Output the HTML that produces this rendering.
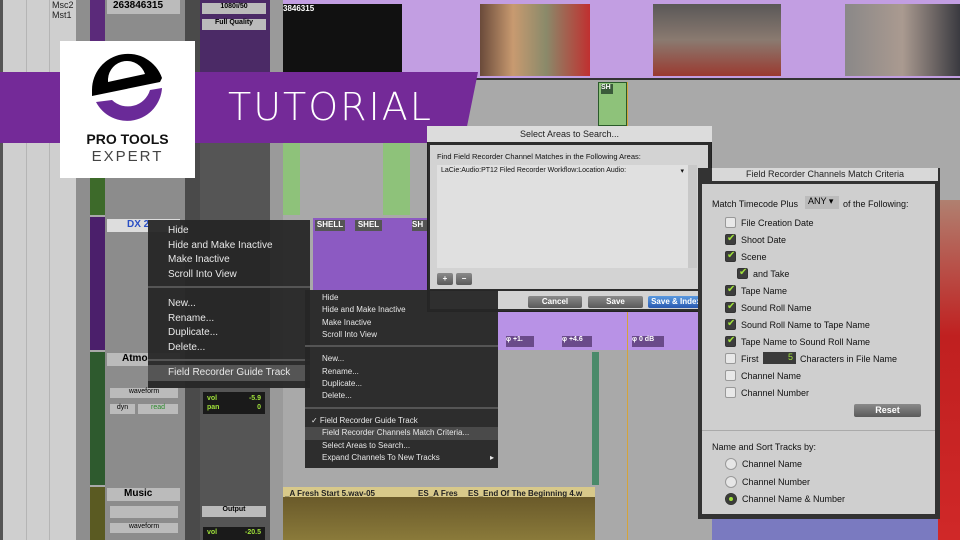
<!DOCTYPE html>
<html><head><meta charset="utf-8"><style>
*{margin:0;padding:0;box-sizing:border-box}
body{width:960px;height:540px;overflow:hidden;background:#a9a9a9;font-family:"Liberation Sans",sans-serif;position:relative}
.a{position:absolute}
.menu{background:rgba(38,38,38,.95);color:#e8e8e8;font-size:10px}
.menu div{position:absolute;white-space:nowrap}
.sep{height:2px;background:#555}
.cb{position:absolute;width:11px;height:11px;background:#e8e8e8;border:1px solid #999;border-radius:2px}
.ck{background:#3d3d3d;border-color:#333}
.ck:after{content:"✔";color:#9fe03a;font-size:10px;position:absolute;left:1px;top:-2px}
.fl{position:absolute;font-size:9px;color:#111;white-space:nowrap}
.btn{position:absolute;height:12px;border-radius:2px;background:linear-gradient(#8a8a8a,#5a5a5a);color:#fff;font-size:8px;font-weight:bold;text-align:center;line-height:12px}
.rad{position:absolute;width:12px;height:12px;border-radius:50%;background:#e6e6e6;border:1px solid #999}
.vl{position:absolute;top:0;bottom:0;width:1px;background:#b8b8b8}
</style></head><body>
<div class="a" style="left:0;top:0;width:76px;height:540px;background:#cfcfcf"></div>
<div class="a" style="left:0;top:0;width:3px;height:540px;background:#555"></div>
<div class="a" style="left:26px;top:0;width:1px;height:540px;background:#b5b5b5"></div>
<div class="a" style="left:49px;top:0;width:1px;height:540px;background:#b5b5b5"></div>
<div class="a" style="left:76px;top:0;width:14px;height:540px;background:#8e8e8e"></div>
<div class="a" style="left:52px;top:0;font-size:9px;color:#222;line-height:10px">Msc2<br>Mst1</div>
<div class="a" style="left:90px;top:0;width:15px;height:215px;background:#5b2a7a"></div>
<div class="a" style="left:90px;top:100px;width:15px;height:115px;background:#3d6a2a"></div>
<div class="a" style="left:90px;top:217px;width:15px;height:133px;background:#4b1f6b"></div>
<div class="a" style="left:90px;top:352px;width:15px;height:133px;background:#2e5a2e"></div>
<div class="a" style="left:90px;top:487px;width:15px;height:53px;background:#5a5a22"></div>
<div class="a" style="left:105px;top:0;width:80px;height:540px;background:#8c8c8c"></div>
<div class="a" style="left:107px;top:0;width:73px;height:14px;background:#bbb;font-size:10px;font-weight:bold;padding-left:6px">263846315</div>
<div class="a" style="left:107px;top:219px;width:73px;height:13px;background:#ddd;font-size:10px;font-weight:bold;color:#2a4fc4;padding-left:20px">DX 2</div>
<div class="a" style="left:107px;top:353px;width:73px;height:13px;background:#bbb;font-size:10px;font-weight:bold;padding-left:15px">Atmo</div>
<div class="a" style="left:107px;top:488px;width:73px;height:13px;background:#bbb;font-size:10px;font-weight:bold;padding-left:17px">Music</div>
<div class="a" style="left:110px;top:388px;width:68px;height:10px;background:#bbb;font-size:7px;text-align:center">waveform</div>
<div class="a" style="left:110px;top:404px;width:25px;height:10px;background:#bbb;font-size:7px;text-align:center">dyn</div>
<div class="a" style="left:138px;top:404px;width:40px;height:10px;background:#bbb;font-size:7px;text-align:center;color:#2a8a2a">read</div>
<div class="a" style="left:110px;top:506px;width:68px;height:12px;background:#bbb"></div>
<div class="a" style="left:110px;top:523px;width:68px;height:10px;background:#bbb;font-size:7px;text-align:center">waveform</div>
<div class="a" style="left:185px;top:0;width:15px;height:540px;background:#4a4a4a"></div>
<div class="a" style="left:200px;top:0;width:70px;height:72px;background:#4b2a66"></div>
<div class="a" style="left:202px;top:3px;width:64px;height:11px;background:#bbb;font-size:7px;font-weight:bold;text-align:center">1080i/50</div>
<div class="a" style="left:202px;top:19px;width:64px;height:11px;background:#bbb;font-size:7px;font-weight:bold;text-align:center">Full Quality</div>
<div class="a" style="left:200px;top:143px;width:70px;height:397px;background:#555"></div>
<div class="a" style="left:203px;top:392px;width:62px;height:22px;background:#1a1a1a;color:#9fe03a;font-size:7px;font-weight:bold;padding:2px 4px;line-height:9px">vol<span style="float:right">-5.9</span><br>pan<span style="float:right">0</span></div>
<div class="a" style="left:202px;top:506px;width:64px;height:11px;background:#bbb;font-size:7px;font-weight:bold;text-align:center">Output</div>
<div class="a" style="left:203px;top:527px;width:62px;height:13px;background:#1a1a1a;color:#9fe03a;font-size:7px;font-weight:bold;padding:2px 4px">vol<span style="float:right">-20.5</span></div>
<div class="a" style="left:270px;top:0;width:13px;height:540px;background:#9a9a9a"></div>
<div class="a" style="left:283px;top:0;width:677px;height:80px;background:#c29ee2;border-bottom:2px solid #333"></div>
<div class="a" style="left:283px;top:4px;width:119px;height:72px;background:#111;color:#fff;font-size:8px;font-weight:bold">3846315</div>
<div class="a" style="left:480px;top:4px;width:110px;height:72px;background:linear-gradient(90deg,#6a4a3a,#c89a70 30%,#8a8a6a 60%,#c03030)"></div>
<div class="a" style="left:653px;top:4px;width:128px;height:72px;background:linear-gradient(180deg,#5a5858,#8a7a70 50%,#9a3a30)"></div>
<div class="a" style="left:845px;top:4px;width:115px;height:72px;background:linear-gradient(90deg,#8a8888,#aa9a90 50%,#3a3a40)"></div>
<div class="a" style="left:283px;top:82px;width:677px;height:133px;background:#a9a9a9"></div>
<div class="a" style="left:283px;top:143px;width:17px;height:72px;background:#8ec27a"></div>
<div class="a" style="left:383px;top:143px;width:27px;height:72px;background:#8ec27a"></div>
<div class="a" style="left:598px;top:82px;width:29px;height:44px;background:#8ec27a;border:1px solid #2a5a2a"></div>
<div class="a" style="left:601px;top:84px;width:12px;height:10px;background:#3a5a3a;color:#fff;font-size:7px;font-weight:bold">SH</div>
<div class="a" style="left:283px;top:217px;width:145px;height:133px;background:#a9a9a9"></div>
<div class="a" style="left:313px;top:218px;width:115px;height:72px;background:#8c5ac2"></div>
<div class="a" style="left:315px;top:220px;width:30px;height:11px;background:#555;color:#fff;font-size:8px;font-weight:bold;text-align:center">SHELL</div>
<div class="a" style="left:355px;top:220px;width:27px;height:11px;background:#555;color:#fff;font-size:8px;font-weight:bold;text-align:center">SHEL</div>
<div class="a" style="left:412px;top:220px;width:15px;height:11px;background:#555;color:#fff;font-size:8px;font-weight:bold">SH</div>
<div class="a" style="left:498px;top:312px;width:200px;height:38px;background:#b892e6"></div>
<div class="a" style="left:506px;top:336px;width:28px;height:11px;background:#6a4a8a;color:#fff;font-size:7px;font-weight:bold">φ +1.</div>
<div class="a" style="left:562px;top:336px;width:30px;height:11px;background:#6a4a8a;color:#fff;font-size:7px;font-weight:bold">φ +4.6</div>
<div class="a" style="left:632px;top:336px;width:32px;height:11px;background:#6a4a8a;color:#fff;font-size:7px;font-weight:bold">φ 0 dB</div>
<div class="a" style="left:283px;top:352px;width:677px;height:133px;background:#a9a9a9"></div>
<div class="a" style="left:592px;top:352px;width:7px;height:133px;background:#4a8a6a"></div>
<div class="a" style="left:283px;top:487px;width:312px;height:53px;background:linear-gradient(#d8c98a 0 10px,#6a5a2a 10px,#8a7a3a)"></div>
<div class="a" style="left:285px;top:489px;font-size:8px;font-weight:bold;color:#222">_A Fresh Start 5.wav-05</div>
<div class="a" style="left:418px;top:489px;font-size:8px;font-weight:bold;color:#222">ES_A Fres</div>
<div class="a" style="left:468px;top:489px;font-size:8px;font-weight:bold;color:#222">ES_End Of The Beginning 4.w</div>
<div class="a" style="left:595px;top:487px;width:365px;height:53px;background:#a9a9a9"></div>
<div class="vl" style="left:627px;background:#d4a43a;top:82px;bottom:0"></div>
<div class="a" style="left:938px;top:200px;width:22px;height:340px;background:linear-gradient(#b08070,#c02020 40%,#d02828)"></div>
<div class="a" style="left:712px;top:380px;width:226px;height:160px;background:#7a7ac0"></div>
<!-- banner -->
<div class="a" style="left:0;top:72px;width:478px;height:71px;background:#742a98;clip-path:polygon(0 0,100% 0,97% 100%,0 100%)"></div>
<div class="a" style="left:228px;top:84px;font-size:38px;color:#fff;letter-spacing:2px;line-height:46px;font-family:'DejaVu Sans','Liberation Sans',sans-serif;font-weight:200">TUTORIAL</div>
<!-- logo -->
<div class="a" style="left:60px;top:41px;width:135px;height:137px;background:#fff"></div>
<svg class="a" style="left:88px;top:46px" width="80" height="80" viewBox="0 0 80 80">
<path d="M4 44 A36 36 0 0 1 74 32 L72 36 L4 50 Z" fill="#000"/>
<path d="M8 56 A35 35 0 0 0 74 42 L62 44 A23 23 0 0 1 24 54 Z" fill="#6a2a98"/>
<path d="M20 33 A19 19 0 0 1 57 28 L20 36 Z" fill="#fff"/>
</svg>
<div class="a" style="left:60px;top:131px;width:135px;text-align:center;font-size:14px;font-weight:bold;color:#111">PRO TOOLS</div>
<div class="a" style="left:60px;top:148px;width:135px;text-align:center;font-size:15px;letter-spacing:2px;color:#444">EXPERT</div>
<!-- Select Areas dialog -->
<div class="a" style="left:427px;top:126px;width:285px;height:186px;background:#2c2c2c;border:1px solid #222"></div>
<div class="a" style="left:427px;top:126px;width:285px;height:16px;background:#dcdcdc;font-size:9px;color:#222;text-align:center;line-height:16px">Select Areas to Search...</div>
<div class="a" style="left:430px;top:145px;width:278px;height:164px;background:#d3d3d3"></div>
<div class="a" style="left:430px;top:289px;width:278px;height:2px;background:#2c2c2c"></div>
<div class="a" style="left:437px;top:152px;font-size:7.5px;color:#111">Find Field Recorder Channel Matches in the Following Areas:</div>
<div class="a" style="left:437px;top:165px;width:251px;height:103px;background:#e0e0e0;font-size:7px;color:#111;padding:2px 4px">LaCie:Audio:PT12 Filed Recorder Workflow:Location Audio:<span style="float:right">▾</span></div>
<div class="a" style="left:688px;top:165px;width:9px;height:103px;background:#c8c8c8"></div>
<div class="btn" style="left:437px;top:273px;width:16px">+</div>
<div class="btn" style="left:456px;top:273px;width:16px">−</div>
<div class="btn" style="left:528px;top:296px;width:54px">Cancel</div>
<div class="btn" style="left:588px;top:296px;width:55px">Save</div>
<div class="btn" style="left:648px;top:296px;width:56px;background:linear-gradient(#5a9ae0,#2a5ab0)">Save &amp; Index</div>
<!-- Field recorder dialog -->
<div class="a" style="left:698px;top:168px;width:242px;height:351px;background:#333"></div>
<div class="a" style="left:712px;top:168px;width:226px;height:13px;background:#d8d8d8;font-size:9px;color:#222;text-align:center;line-height:13px">Field Recorder Channels Match Criteria</div>
<div class="a" style="left:702px;top:184px;width:233px;height:330px;background:#cfcfcf"></div>
<div class="a" style="left:702px;top:430px;width:233px;height:1px;background:#aaa"></div>
<div class="fl" style="left:712px;top:199px">Match Timecode Plus</div>
<div class="a" style="left:805px;top:196px;width:34px;height:13px;background:#bbb;font-size:9px;padding-left:3px">ANY ▾</div>
<div class="fl" style="left:843px;top:199px">of the Following:</div>
<div class="cb" style="left:725px;top:217px"></div><div class="fl" style="left:741px;top:218px">File Creation Date</div>
<div class="cb ck" style="left:725px;top:234px"></div><div class="fl" style="left:741px;top:235px">Shoot Date</div>
<div class="cb ck" style="left:725px;top:251px"></div><div class="fl" style="left:741px;top:252px">Scene</div>
<div class="cb ck" style="left:737px;top:268px"></div><div class="fl" style="left:753px;top:269px">and Take</div>
<div class="cb ck" style="left:725px;top:285px"></div><div class="fl" style="left:741px;top:286px">Tape Name</div>
<div class="cb ck" style="left:725px;top:302px"></div><div class="fl" style="left:741px;top:303px">Sound Roll Name</div>
<div class="cb ck" style="left:725px;top:319px"></div><div class="fl" style="left:741px;top:320px">Sound Roll Name to Tape Name</div>
<div class="cb ck" style="left:725px;top:336px"></div><div class="fl" style="left:741px;top:337px">Tape Name to Sound Roll Name</div>
<div class="cb" style="left:725px;top:353px"></div><div class="fl" style="left:741px;top:354px">First</div>
<div class="a" style="left:763px;top:352px;width:33px;height:12px;background:#3a3a3a;color:#9fe03a;font-size:9px;text-align:right;padding-right:3px">5</div>
<div class="fl" style="left:800px;top:354px">Characters in File Name</div>
<div class="cb" style="left:725px;top:370px"></div><div class="fl" style="left:741px;top:371px">Channel Name</div>
<div class="cb" style="left:725px;top:387px"></div><div class="fl" style="left:741px;top:388px">Channel Number</div>
<div class="btn" style="left:854px;top:404px;width:67px;height:13px;font-size:9px">Reset</div>
<div class="fl" style="left:712px;top:442px">Name and Sort Tracks by:</div>
<div class="rad" style="left:725px;top:458px"></div><div class="fl" style="left:742px;top:459px">Channel Name</div>
<div class="rad" style="left:725px;top:476px"></div><div class="fl" style="left:742px;top:477px">Channel Number</div>
<div class="rad" style="left:725px;top:493px;background:#3a3a3a;border-color:#333;box-shadow:inset 0 0 0 3px #3a3a3a,inset 0 0 0 6px #9fe03a"></div><div class="fl" style="left:742px;top:494px">Channel Name &amp; Number</div>
<!-- Menu 1 -->
<div class="a menu" style="left:148px;top:220px;width:162px;height:168px">
<div style="left:20px;top:5px">Hide</div>
<div style="left:20px;top:20px">Hide and Make Inactive</div>
<div style="left:20px;top:34px">Make Inactive</div>
<div style="left:20px;top:49px">Scroll Into View</div>
<div class="sep" style="left:0;top:66px;width:162px"></div>
<div style="left:20px;top:78px">New...</div>
<div style="left:20px;top:93px">Rename...</div>
<div style="left:20px;top:107px">Duplicate...</div>
<div style="left:20px;top:122px">Delete...</div>
<div class="sep" style="left:0;top:139px;width:162px"></div>
<div style="left:0;top:145px;width:162px;height:16px;background:#555"></div>
<div style="left:20px;top:147px">Field Recorder Guide Track</div>
</div>
<!-- Menu 2 -->
<div class="a menu" style="left:305px;top:290px;width:193px;height:178px;font-size:8px">
<div style="left:17px;top:3px">Hide</div>
<div style="left:17px;top:15px">Hide and Make Inactive</div>
<div style="left:17px;top:28px">Make Inactive</div>
<div style="left:17px;top:40px">Scroll Into View</div>
<div class="sep" style="left:0;top:55px;width:193px"></div>
<div style="left:17px;top:64px">New...</div>
<div style="left:17px;top:77px">Rename...</div>
<div style="left:17px;top:89px">Duplicate...</div>
<div style="left:17px;top:101px">Delete...</div>
<div class="sep" style="left:0;top:117px;width:193px"></div>
<div style="left:6px;top:126px">✓ Field Recorder Guide Track</div>
<div style="left:0;top:137px;width:193px;height:13px;background:#4a4a4a"></div>
<div style="left:17px;top:138px">Field Recorder Channels Match Criteria...</div>
<div style="left:17px;top:151px">Select Areas to Search...</div>
<div style="left:17px;top:163px">Expand Channels To New Tracks</div>
<div style="left:185px;top:163px">▸</div>
</div>
</body></html>
